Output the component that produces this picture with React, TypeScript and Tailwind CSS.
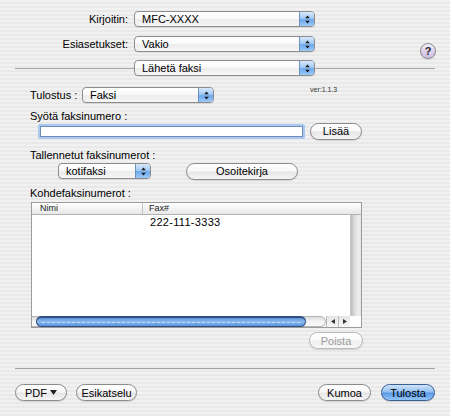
import React from "react";

// Mac OS X print dialog — fax pane (Aqua look)

function Arrows() {
  return (
    <svg width="5" height="9" viewBox="0 0 5 9" aria-hidden>
      <path d="M2.5 0.5 L4.8 3.3 L0.2 3.3 Z" fill="#1a1a1a" />
      <path d="M2.5 8.5 L4.8 5.7 L0.2 5.7 Z" fill="#1a1a1a" />
    </svg>
  );
}

function Popup({ label, className }: { label: string; className: string }) {
  return (
    <div
      className={`flex h-[16px] shrink-0 overflow-hidden rounded-[4px] border border-[#8d8d8d] bg-[linear-gradient(180deg,#ffffff_0%,#fafafa_45%,#ececec_55%,#f6f6f6_100%)] shadow-[0_1px_0_rgba(0,0,0,0.08)] ${className}`}
    >
      <span className="flex-1 truncate pl-[7px] text-[11px] leading-[14px] text-black">{label}</span>
      <span className="flex w-[15px] items-center justify-center border-l border-[#6d8fc0] bg-[linear-gradient(180deg,#d6e8fc_0%,#a4cbf4_45%,#6da9ec_55%,#9ccaf7_100%)]">
        <Arrows />
      </span>
    </div>
  );
}

function AquaButton({
  children,
  className,
  variant = "normal",
}: {
  children: React.ReactNode;
  className: string;
  variant?: "normal" | "default" | "disabled";
}) {
  const look =
    variant === "default"
      ? "border-[#3b5f95] bg-[linear-gradient(180deg,#cfe3fa_0%,#94c0f1_45%,#5a99e6_55%,#93c6fa_100%)] text-black"
      : variant === "disabled"
      ? "border-[#b9b9b9] bg-[linear-gradient(180deg,#ffffff_0%,#fbfbfb_45%,#f0f0f0_55%,#f8f8f8_100%)] text-[#9a9a9a]"
      : "border-[#8a8a8a] bg-[linear-gradient(180deg,#ffffff_0%,#f8f8f8_45%,#e6e6e6_55%,#f6f6f6_100%)] text-black";
  return (
    <div
      className={`flex h-[17px] shrink-0 items-center justify-center rounded-full border text-[11px] leading-[14px] shadow-[0_1px_1px_rgba(0,0,0,0.12)] ${look} ${className}`}
    >
      {children}
    </div>
  );
}

function FaxTable() {
  return (
    <div className="ml-[31px] flex h-[126px] w-[331px] flex-col border border-[#9b9b9b] bg-white">
      <div className="flex h-[12px] shrink-0 border-b border-[#b3b3b3] bg-[linear-gradient(180deg,#ffffff_0%,#f3f3f3_50%,#e8e8e8_100%)] text-[9px] leading-[11px] text-[#222]">
        <span className="w-[111px] border-r border-[#c4c4c4] pl-[8px]">Nimi</span>
        <span className="pl-[6px]">Fax#</span>
      </div>
      <div className="flex min-h-0 flex-1">
        <div className="flex-1">
          <div className="flex h-[15px] items-center text-[11px] tracking-[0.3px] text-black">
            <span className="w-[118px]" />
            <span>222-111-3333</span>
          </div>
        </div>
        <div className="w-[11px] border-l border-[#c9c9c9] bg-[linear-gradient(90deg,#bdbdbd_0%,#dcdcdc_35%,#efefef_75%,#e4e4e4_100%)]" />
      </div>
      <div className="flex h-[11px] shrink-0">
        <div className="flex w-[294px] items-center rounded-r-full border border-l-0 border-[#b4b4b4] bg-[linear-gradient(180deg,#dcdcdc_0%,#f2f2f2_45%,#fbfbfb_100%)]">
          <div className="ml-[4px] flex h-[11px] w-[270px] shrink-0 items-center rounded-full border border-t-2 border-[#2f4f80] bg-[linear-gradient(180deg,#5f93d8_0%,#8dbcf0_50%,#6ea3e6_75%,#5c94dc_100%)] px-[5px]">
            <div className="h-0 w-full border-t border-dashed border-[#c4dcf8]" />
          </div>
        </div>
        <div className="flex w-[24px] bg-[linear-gradient(180deg,#e4e4e4_0%,#f8f8f8_100%)]">
          <span className="flex flex-1 items-center justify-center border-l border-[#bcbcbc]">
            <svg width="4" height="5" viewBox="0 0 4 5" aria-hidden>
              <path d="M0 2.5 L4 0 L4 5 Z" fill="#333" />
            </svg>
          </span>
          <span className="flex flex-1 items-center justify-center border-l border-[#bcbcbc]">
            <svg width="4" height="5" viewBox="0 0 4 5" aria-hidden>
              <path d="M4 2.5 L0 0 L0 5 Z" fill="#333" />
            </svg>
          </span>
        </div>
        <div className="flex-1 bg-white" />
      </div>
    </div>
  );
}

export default function App() {
  return (
    <div
      className="flex h-[416px] w-[450px] flex-col overflow-hidden bg-[repeating-linear-gradient(180deg,#f1f1f1_0px,#f1f1f1_2px,#e9e9e9_2px,#e9e9e9_4px)] text-[11px] text-black"
      style={{ fontFamily: '"Liberation Sans", Arial, sans-serif' }}
    >
      {/* printer + presets */}
      <div className="mt-[11px] flex h-[16px] items-center">
        <span className="w-[128px] text-right leading-[14px]">Kirjoitin:</span>
        <Popup label="MFC-XXXX" className="ml-[6px] w-[181px]" />
      </div>
      <div className="mt-[9px] flex items-start">
        <span className="flex h-[16px] w-[128px] items-center justify-end leading-[14px]">Esiasetukset:</span>
        <Popup label="Vakio" className="ml-[6px] w-[181px]" />
        <div className="ml-auto mr-[14px] mt-[7px] flex h-[16px] w-[16px] items-center justify-center rounded-full border border-[#8c8c8c] bg-[linear-gradient(180deg,#f4effb_0%,#ddd2ee_50%,#cbbde4_100%)] text-[11px] font-bold leading-none text-[#2a2a2a] shadow-[0_1px_1px_rgba(0,0,0,0.15)]">
          ?
        </div>
      </div>

      {/* pane selector */}
      <div className="mt-[1px] flex h-[16px] items-center px-[15px]">
        <div className="h-px w-[119px] bg-[#a6a6a6]" />
        <Popup label="Lähetä faksi" className="w-[181px]" />
        <div className="h-px flex-1 bg-[#a6a6a6]" />
      </div>

      {/* fax pane */}
      <div className="mt-[11px] flex h-[16px] items-center pl-[30px]">
        <span className="w-[52px] leading-[14px]">Tulostus :</span>
        <Popup label="Faksi" className="w-[132px]" />
        <span className="ml-[96px] -mt-[10px] text-[7px] leading-[8px] text-[#333]">ver:1.1.3</span>
      </div>

      <div className="mt-[6px] h-[14px] pl-[30px] leading-[14px]">Syötä faksinumero :</div>
      <div className="flex h-[16px] items-center pl-[38px]">
        <div className="h-[15px] w-[267px] rounded-[2px] bg-[#a9c9ef] p-[2px]">
          <div className="h-full w-full border border-[#6f8db5] bg-white" />
        </div>
        <AquaButton className="ml-[5px] w-[52px]">Lisää</AquaButton>
      </div>

      <div className="mt-[9px] h-[14px] pl-[30px] leading-[14px]">Tallennetut faksinumerot :</div>
      <div className="mt-[1px] flex h-[16px] items-center pl-[58px]">
        <Popup label="kotifaksi" className="w-[93px]" />
        <AquaButton className="ml-[35px] w-[112px]">Osoitekirja</AquaButton>
      </div>

      <div className="mt-[7px] h-[14px] pl-[30px] leading-[14px]">Kohdefaksinumerot :</div>
      <div className="mt-[2px]">
        <FaxTable />
      </div>
      <div className="mt-[4px] flex pl-[309px]">
        <AquaButton variant="disabled" className="w-[54px]">
          Poista
        </AquaButton>
      </div>

      {/* footer */}
      <div className="mx-[15px] mt-[19px] h-px bg-[#a0a0a0]" />
      <div className="mt-[15px] flex items-center px-[15px]">
        <AquaButton className="w-[52px]">
          <span className="flex items-center gap-[3px]">
            PDF
            <svg width="7" height="5" viewBox="0 0 7 5" aria-hidden>
              <path d="M0 0 L7 0 L3.5 5 Z" fill="#222" />
            </svg>
          </span>
        </AquaButton>
        <AquaButton className="ml-[9px] w-[61px]">Esikatselu</AquaButton>
        <AquaButton className="ml-auto w-[53px]">Kumoa</AquaButton>
        <AquaButton variant="default" className="ml-[10px] w-[54px]">
          Tulosta
        </AquaButton>
      </div>
    </div>
  );
}
